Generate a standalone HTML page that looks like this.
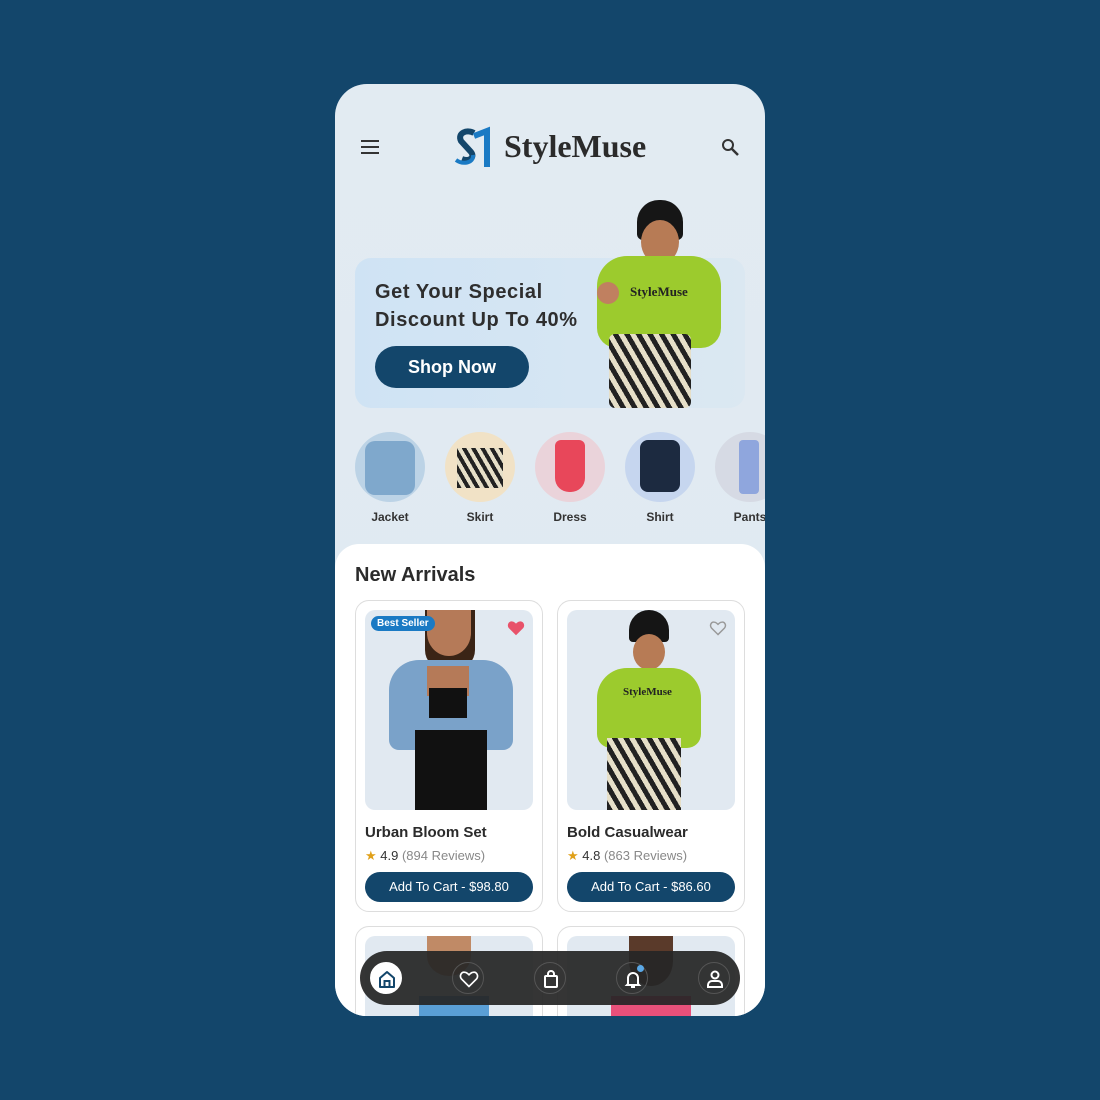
<!DOCTYPE html>
<html><head><meta charset="utf-8"><style>
*{margin:0;padding:0;box-sizing:border-box}
html,body{overflow:hidden}
body{width:1100px;height:1100px;background:#13466b;font-family:"Liberation Sans",sans-serif;position:relative;overflow:hidden}
.phone{position:absolute;left:335px;top:84px;width:430px;height:932px;border-radius:32px;background:linear-gradient(180deg,#e2ebf2,#dfe9f1);overflow:hidden}
.abs{position:absolute}
.banner{left:20px;top:174px;width:390px;height:150px;border-radius:16px;background:linear-gradient(90deg,#cfe3f4,#dbe8f2)}
.btitle{left:40px;top:194px;font-size:20px;font-weight:bold;color:#2e2e2e;line-height:28px;letter-spacing:.6px}
.shop{left:40px;top:262px;width:154px;height:42px;border-radius:21px;background:#13466b;color:#fff;font-weight:bold;font-size:18px;text-align:center;line-height:42px}
.cat{position:absolute;top:348px;width:70px;text-align:center}
.cat .c{width:70px;height:70px;border-radius:50%}
.cat span{display:block;font-size:12px;font-weight:bold;color:#333;margin-top:8px}
.white{left:0;top:460px;width:430px;height:500px;background:#fff;border-radius:24px 24px 0 0}
.card{position:absolute;width:188px;height:312px;border:1px solid #ddd;border-radius:14px;background:#fff;overflow:hidden}
.img{position:absolute;left:9px;top:9px;width:168px;height:200px;border-radius:10px;background:#e1e9f1;overflow:hidden}
.name{position:absolute;left:9px;top:223px;font-size:15px;font-weight:bold;color:#2b2b2b}
.rate{position:absolute;left:9px;top:247px;font-size:13px;color:#333}
.rate i{font-style:normal;color:#888}
.cart{position:absolute;left:9px;top:271px;width:168px;height:30px;border-radius:15px;background:#13466b;color:#fff;font-size:13px;text-align:center;line-height:30px}
.nav{left:25px;top:867px;width:380px;height:54px;border-radius:27px;background:rgba(38,38,38,.93)}
.ni{position:absolute;top:11px;width:32px;height:32px;border-radius:50%;border:1px solid #555}
.ni svg{position:absolute;left:6px;top:6px}
</style></head><body>
<div class="phone">
 <svg class="abs" style="left:26px;top:56px" width="18" height="14"><path d="M0 1h18M0 7h18M0 13h18" stroke="#333" stroke-width="2"/></svg>
 <svg class="abs" style="left:117px;top:42px" width="44" height="42" viewBox="0 0 44 42"><path d="M22 7c-7-4-17 0-13 8l10 11c4 5-1 10-9 7" stroke="#13466b" stroke-width="6" fill="none"/><path d="M4 34c7 5 18 3 17-5" stroke="#1a7ac4" stroke-width="4" fill="none"/><path d="M22 10l13-5v36" stroke="#1a7ac4" stroke-width="6" fill="none"/></svg>
 <div class="abs" style="left:169px;top:44px;font-family:'Liberation Serif',serif;font-weight:bold;font-size:32px;color:#2b2b2b">StyleMuse</div>
 <svg class="abs" style="left:386px;top:54px" width="18" height="18"><circle cx="7" cy="7" r="5" stroke="#333" stroke-width="2" fill="none"/><path d="M11 11l6 6" stroke="#333" stroke-width="2.5"/></svg>
 <div class="abs banner"></div>
 <div class="abs btitle">Get Your Special<br>Discount Up To 40%</div>
 <div class="abs shop">Shop Now</div>
 <div class="abs" style="left:302px;top:116px;width:46px;height:40px;border-radius:22px 22px 6px 6px;background:#161616"></div>
 <div class="abs" style="left:306px;top:136px;width:38px;height:44px;border-radius:50%;background:#b77b55"></div>
 <div class="abs" style="left:262px;top:172px;width:124px;height:92px;border-radius:30px 30px 20px 20px;background:#9ccb2d"></div>
 <div class="abs" style="left:295px;top:200px;font-family:'Liberation Serif',serif;font-weight:bold;font-size:13px;color:#222">StyleMuse</div>
 <div class="abs" style="left:262px;top:198px;width:22px;height:22px;border-radius:50%;background:#c08060"></div>
 <div class="abs" style="left:274px;top:250px;width:82px;height:74px;background:repeating-linear-gradient(60deg,#222 0 5px,#e6dfc8 5px 10px);border-radius:6px"></div>
 <div class="cat" style="left:20px"><div class="c" style="background:#bcd3e6"></div><span>Jacket</span></div>
 <div class="cat" style="left:110px"><div class="c" style="background:#f1e2c6"></div><span>Skirt</span></div>
 <div class="cat" style="left:200px"><div class="c" style="background:#ead3da"></div><span>Dress</span></div>
 <div class="cat" style="left:290px"><div class="c" style="background:#c6d6ef"></div><span>Shirt</span></div>
 <div class="cat" style="left:380px"><div class="c" style="background:#d6dae4"></div><span>Pants</span></div>
 <div class="abs" style="left:30px;top:357px;width:50px;height:54px;background:#7fa8cc;border-radius:10px"></div>
 <div class="abs" style="left:122px;top:364px;width:46px;height:40px;background:repeating-linear-gradient(60deg,#222 0 4px,#e6dfc8 4px 8px)"></div>
 <div class="abs" style="left:220px;top:356px;width:30px;height:52px;background:#e8475a;border-radius:6px 6px 14px 14px"></div>
 <div class="abs" style="left:305px;top:356px;width:40px;height:52px;background:#1c2a40;border-radius:8px"></div>
 <div class="abs" style="left:404px;top:356px;width:20px;height:54px;background:#8fa6dd;border-radius:4px"></div>
 <div class="abs white"></div>
 <div class="abs" style="left:20px;top:480px;font-size:20px;font-weight:bold;color:#2b2b2b">New Arrivals</div>
 <div class="card" style="left:20px;top:516px"><div class="img">
   <div class="abs" style="left:60px;top:0;width:50px;height:60px;background:#3a2416;border-radius:0 0 20px 20px"></div>
   <div class="abs" style="left:62px;top:0;width:44px;height:46px;background:#b57a58;border-radius:0 0 50% 50%"></div>
   <div class="abs" style="left:24px;top:50px;width:124px;height:90px;background:#7aa2c9;border-radius:30px 30px 10px 10px"></div>
   <div class="abs" style="left:62px;top:56px;width:42px;height:30px;background:#b57a58"></div>
   <div class="abs" style="left:64px;top:78px;width:38px;height:30px;background:#111"></div>
   <div class="abs" style="left:50px;top:120px;width:72px;height:80px;background:#111"></div>
  </div>
  <div class="abs" style="left:15px;top:15px;background:#1a7ac4;color:#fff;font-size:10px;font-weight:bold;padding:2px 6px;border-radius:9px">Best Seller</div>
  <svg class="abs" style="left:151px;top:19px" width="18" height="16" viewBox="0 0 24 22"><path d="M12 21L2 11C-1 7 2 1 7 2c2 0 4 2 5 3 1-1 3-3 5-3 5-1 8 5 5 9z" fill="#e8526a"/></svg>
  <div class="name">Urban Bloom Set</div>
  <div class="rate"><span style="color:#e0a019">★</span> 4.9 <i>(894 Reviews)</i></div>
  <div class="cart">Add To Cart - $98.80</div></div>
 <div class="card" style="left:222px;top:516px"><div class="img">
   <div class="abs" style="left:62px;top:0;width:40px;height:32px;background:#151515;border-radius:20px 20px 4px 4px"></div>
   <div class="abs" style="left:66px;top:24px;width:32px;height:36px;background:#b77b55;border-radius:50%"></div>
   <div class="abs" style="left:30px;top:58px;width:104px;height:80px;background:#9ccb2d;border-radius:30px 30px 14px 14px"></div>
   <div class="abs" style="left:56px;top:76px;font-family:'Liberation Serif',serif;font-weight:bold;font-size:11px;color:#222">StyleMuse</div>
   <div class="abs" style="left:40px;top:128px;width:74px;height:72px;background:repeating-linear-gradient(60deg,#222 0 5px,#e6dfc8 5px 10px)"></div>
  </div>
  <svg class="abs" style="left:151px;top:19px" width="18" height="16" viewBox="0 0 24 22"><path d="M12 20L3 11C0 7 3 2 7 3c2 0 4 2 5 3 1-1 3-3 5-3 4-1 7 4 4 8z" fill="none" stroke="#999" stroke-width="2"/></svg>
  <div class="name">Bold Casualwear</div>
  <div class="rate"><span style="color:#e0a019">★</span> 4.8 <i>(863 Reviews)</i></div>
  <div class="cart">Add To Cart - $86.60</div></div>
 <div class="card" style="left:20px;top:842px"><div class="img" style="height:120px">
   <div class="abs" style="left:62px;top:0;width:44px;height:40px;background:#c08a66;border-radius:0 0 50% 50%"></div>
   <div class="abs" style="left:54px;top:60px;width:70px;height:60px;background:#5a9fd6"></div></div></div>
 <div class="card" style="left:222px;top:842px"><div class="img" style="height:120px">
   <div class="abs" style="left:62px;top:0;width:44px;height:50px;background:#5a3a2a;border-radius:0 0 50% 50%"></div>
   <div class="abs" style="left:44px;top:60px;width:80px;height:60px;background:#e8507a"></div></div></div>
 <div class="abs nav">
  <div class="ni" style="left:10px;background:#fff;border-color:#fff"><svg width="20" height="20" viewBox="0 0 20 20"><path d="M3 9l7-6 7 6v9H3z" fill="none" stroke="#13466b" stroke-width="2" stroke-linejoin="round"/><path d="M7.5 18v-6h5v6" fill="none" stroke="#13466b" stroke-width="2"/></svg></div>
  <div class="ni" style="left:92px"><svg width="20" height="20" viewBox="0 0 24 22"><path d="M12 20L3 11C0 7 3 2 7 3c2 0 4 2 5 3 1-1 3-3 5-3 4-1 7 4 4 8z" fill="none" stroke="#fff" stroke-width="2"/></svg></div>
  <div class="ni" style="left:174px"><svg width="20" height="20" viewBox="0 0 20 20"><rect x="4" y="7" width="12" height="11" rx="1" fill="none" stroke="#fff" stroke-width="2"/><path d="M7 7V5a3 3 0 016 0v2" fill="none" stroke="#fff" stroke-width="2"/></svg></div>
  <div class="ni" style="left:256px"><svg width="20" height="20" viewBox="0 0 20 20"><path d="M5 15V9a5 5 0 0110 0v6l1 1H4z" fill="none" stroke="#fff" stroke-width="2"/><path d="M8 18h4" stroke="#fff" stroke-width="2"/></svg><div class="abs" style="left:20px;top:2px;width:7px;height:7px;border-radius:50%;background:#5aa8e6"></div></div>
  <div class="ni" style="left:338px"><svg width="20" height="20" viewBox="0 0 20 20"><circle cx="10" cy="6" r="3.5" fill="none" stroke="#fff" stroke-width="2"/><path d="M3 18v-2a4 4 0 014-4h6a4 4 0 014 4v2z" fill="none" stroke="#fff" stroke-width="2"/></svg></div>
 </div>
</div>
</body></html>
